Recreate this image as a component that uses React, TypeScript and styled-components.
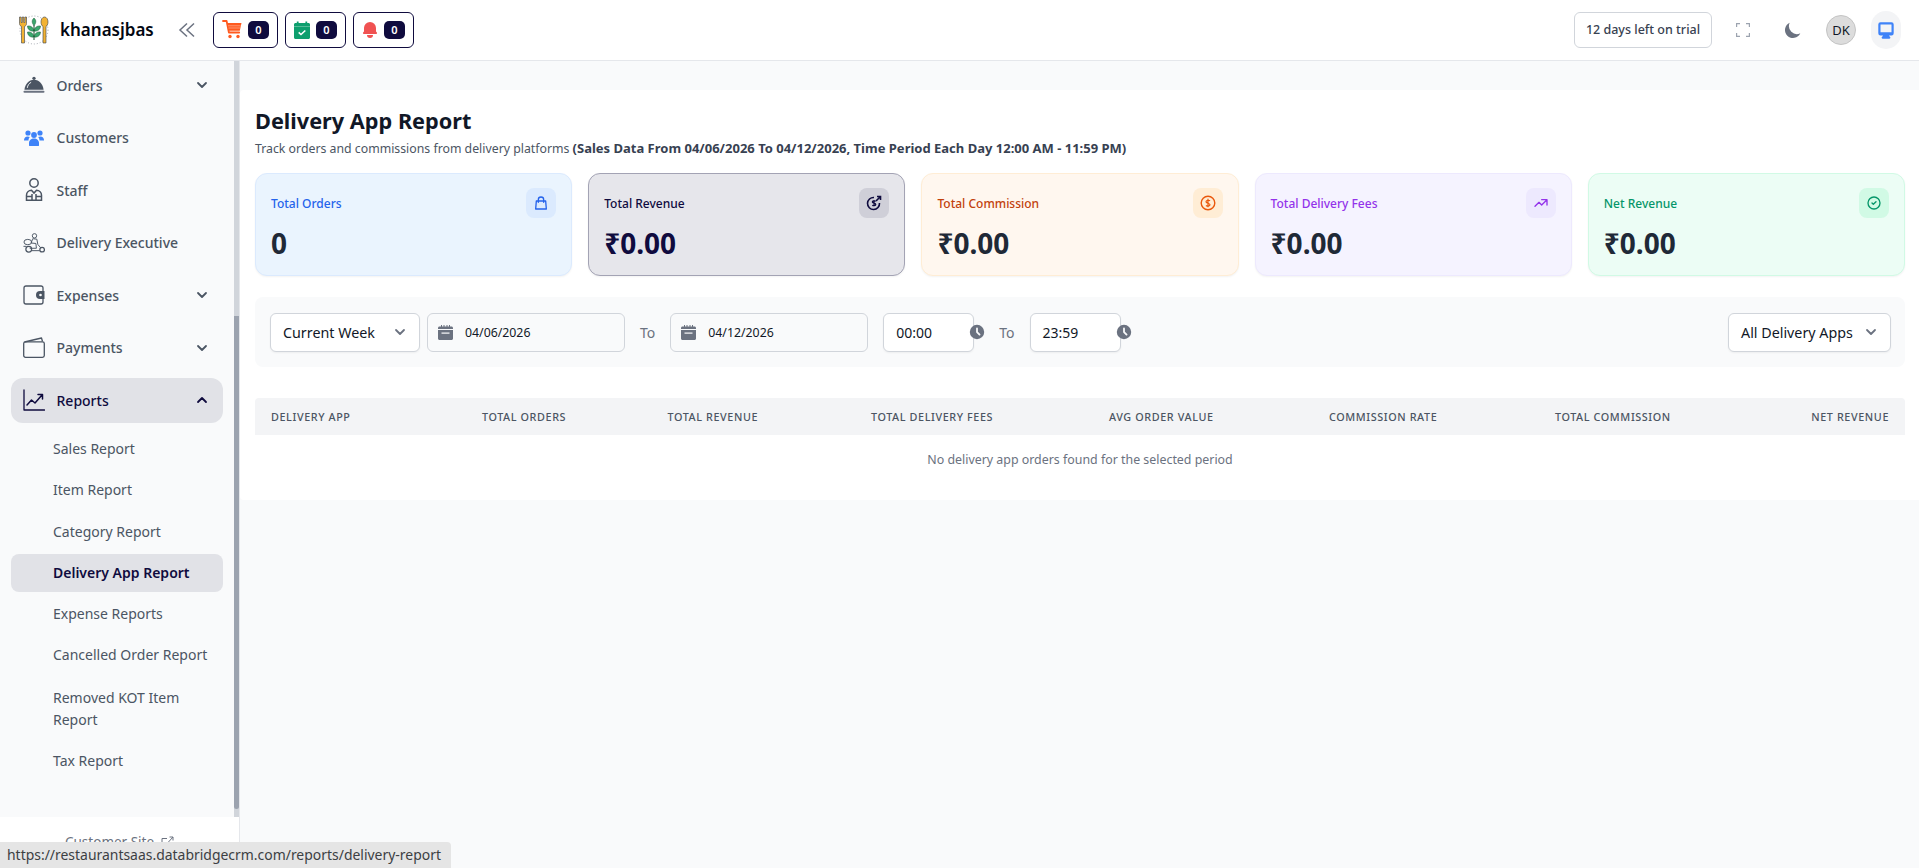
import React from 'react';
import styled, { createGlobalStyle } from 'styled-components';
import {
  HiBell,
  HiClock,
  HiDesktopComputer,
  HiMoon,
  HiOutlineCheckCircle,
  HiOutlineShoppingBag,
  HiOutlineTrendingUp,
} from 'react-icons/hi';

const NAVY = '#0f0b3e';

const GlobalStyle = createGlobalStyle`
  html, body {
    margin: 0;
    height: 100%;
    overflow: hidden;
    background: #f9fafb;
    font-family: "Noto Sans", "Liberation Sans", sans-serif;
  }
  * { box-sizing: border-box; }
`;

const Page = styled.div`
  position: relative;
  height: 868px;
  display: flex;
  flex-direction: column;
  overflow: hidden;
`;

const Header = styled.header`
  height: 61px;
  flex: none;
  background: #fff;
  border-bottom: 1px solid #e5e7eb;
  display: flex;
  align-items: center;
  padding: 0 18px 1px 18px;
`;

const Brand = styled.div`
  display: flex;
  align-items: center;
  gap: 10px;
  width: 160px;
  font-size: 17px;
  font-weight: 600;
  color: #030712;
`;

const Collapse = styled.button`
  border: 0;
  background: none;
  padding: 0;
  display: flex;
  width: 35px;
  color: #6b7280;
`;

const Counters = styled.div`
  display: flex;
  gap: 7px;
`;

const Counter = styled.div`
  height: 36px;
  padding: 0 8px;
  display: flex;
  align-items: center;
  gap: 6px;
  border: 1px solid ${NAVY};
  border-radius: 6px;
`;

const Badge = styled.span`
  min-width: 21px;
  height: 18px;
  border-radius: 5px;
  background: ${NAVY};
  color: #fff;
  font-size: 11px;
  font-weight: 600;
  display: flex;
  align-items: center;
  justify-content: center;
`;

const BellBox = styled.span`
  display: flex;
  margin: 0 -2px;
  color: #f05252;
`;

const HeaderRight = styled.div`
  margin-left: auto;
  display: flex;
  align-items: center;
`;

const Trial = styled.div`
  width: 138px;
  height: 36px;
  border: 1px solid #d1d5db;
  border-radius: 6px;
  font-size: 12.5px;
  font-weight: 500;
  color: #374151;
  display: flex;
  align-items: center;
  justify-content: center;
  margin-right: 24px;
`;

const HeaderIcon = styled.span<{ $w: number }>`
  display: flex;
  width: ${(p) => p.$w}px;
  color: #6b7280;
`;

const Avatar = styled.div`
  width: 30px;
  height: 30px;
  border-radius: 50%;
  background: #dcdcdc;
  border: 1px solid #c4c4c4;
  color: #111827;
  font-size: 13px;
  display: flex;
  align-items: center;
  justify-content: center;
  margin-right: 15px;
`;

const ThemeButton = styled.div`
  width: 30px;
  height: 38px;
  border-radius: 15px;
  background: #f3f4f6;
  color: #3f83f8;
  display: flex;
  align-items: center;
  justify-content: center;
`;

const Body = styled.div`
  flex: 1;
  display: flex;
  min-height: 0;
`;

const Sidebar = styled.aside`
  width: 240px;
  flex: none;
  display: flex;
  flex-direction: column;
  background: #fff;
  border-right: 1px solid #e5e7eb;
`;

const SideScroll = styled.div`
  height: 756px;
  flex: none;
  display: flex;
  background: #f9fafb;
`;

const Nav = styled.nav`
  flex: 1;
  padding: 1.5px 11px 0;
`;

const Track = styled.div`
  width: 5px;
  background: #d1d5db;
  padding-top: 255px;
`;

const Thumb = styled.div`
  height: 493px;
  background: #9ca3af;
  border-radius: 0 0 3px 3px;
`;

const NavItem = styled.div<{ $active?: boolean }>`
  height: 45px;
  margin-bottom: 7.5px;
  padding: 0 14px 0 12px;
  display: flex;
  align-items: center;
  gap: 11.5px;
  border-radius: 12px;
  font-size: 14px;
  font-weight: 500;
  color: ${(p) => (p.$active ? NAVY : '#4b5563')};
  background: ${(p) => (p.$active ? '#e1e2e7' : 'transparent')};
`;

const NavIcon = styled.span`
  width: 22px;
  height: 22px;
  flex: none;
  display: flex;
  align-items: center;
  justify-content: center;
`;

const Caret = styled.span`
  margin-left: auto;
  display: flex;
`;

const SubItem = styled.div<{ $active?: boolean; $tall?: boolean }>`
  margin-bottom: 3.3px;
  padding: ${(p) => (p.$tall ? '9px' : '8px')} 12px 8px 42px;
  border-radius: 8px;
  font-size: 14px;
  line-height: 22px;
  font-weight: ${(p) => (p.$active ? 600 : 400)};
  color: ${(p) => (p.$active ? NAVY : '#4b5563')};
  background: ${(p) => (p.$active ? '#e1e2e7' : 'transparent')};
`;

const SideFooter = styled.div`
  padding: 16px 0 0 65px;
  display: flex;
  align-items: center;
  gap: 7px;
  font-size: 13.5px;
  line-height: 18px;
  color: #6b7280;
`;

const StatusBar = styled.div`
  position: absolute;
  left: 0;
  bottom: 0;
  width: 451px;
  height: 26px;
  padding-left: 7px;
  background: #e5e5e5;
  border-top-right-radius: 4px;
  color: #3c4043;
  font-size: 13.95px;
  line-height: 26px;
  white-space: nowrap;
`;

const Main = styled.main`
  flex: 1;
  padding-top: 29px;
  min-width: 0;
`;

const Panel = styled.section`
  background: #fff;
  padding: 16px 14px 0 15px;
  height: 410px;
  border-radius: 4px 0 0 4px;
`;

const Title = styled.h1`
  margin: 0;
  font-size: 21.7px;
  line-height: 30px;
  font-weight: 700;
  color: #111827;
`;

const Subtitle = styled.p`
  margin: 4px 0 0;
  font-size: 12.3px;
  line-height: 17px;
  color: #4b5563;
  strong {
    font-size: 13px;
    font-weight: 700;
    color: #374151;
  }
`;

const Cards = styled.div`
  margin-top: 16px;
  display: grid;
  grid-template-columns: repeat(5, 1fr);
  gap: 16px;
`;

const tones = {
  blue: { bg: '#eaf4fe', border: '#dbeafe', label: '#2563eb', box: '#dbeafe', icon: '#2563eb', value: '#1f2937' },
  navy: { bg: '#e6e6eb', border: '#a3a3b4', label: NAVY, box: '#cfcfd8', icon: NAVY, value: NAVY },
  orange: { bg: '#fff7ef', border: '#ffedd5', label: '#c2410c', box: '#ffedd5', icon: '#ea580c', value: '#1f2937' },
  purple: { bg: '#f5f3ff', border: '#ede9fe', label: '#9333ea', box: '#ede9fe', icon: '#9333ea', value: '#1f2937' },
  green: { bg: '#ecfdf5', border: '#d1fae5', label: '#059669', box: '#d1fae5', icon: '#059669', value: '#1f2937' },
};
type Tone = keyof typeof tones;

const Card = styled.div<{ $tone: Tone }>`
  height: 103px;
  padding: 14px 15px;
  border: 1px solid ${(p) => tones[p.$tone].border};
  border-radius: 12px;
  background: ${(p) => tones[p.$tone].bg};
  box-shadow: 0 1px 2px rgba(0, 0, 0, 0.05);
`;

const CardTop = styled.div`
  display: flex;
  align-items: center;
  justify-content: space-between;
`;

const CardLabel = styled.span<{ $tone: Tone }>`
  font-size: 12px;
  font-weight: 500;
  color: ${(p) => tones[p.$tone].label};
`;

const CardIcon = styled.span<{ $tone: Tone }>`
  width: 30px;
  height: 30px;
  border-radius: 8px;
  display: flex;
  align-items: center;
  justify-content: center;
  background: ${(p) => tones[p.$tone].box};
  color: ${(p) => tones[p.$tone].icon};
`;

const CardValue = styled.div<{ $tone: Tone }>`
  margin-top: 9px;
  font-size: 28px;
  line-height: 32px;
  font-weight: 700;
  color: ${(p) => tones[p.$tone].value};
`;

const Filters = styled.div`
  margin-top: 21px;
  height: 70px;
  padding: 0 14px 0 15px;
  display: flex;
  align-items: center;
  border-radius: 8px;
  background: #f9fafb;
`;

const Select = styled.div<{ $w: number; $left?: boolean }>`
  width: ${(p) => p.$w}px;
  height: 39px;
  padding: 0 12px;
  display: flex;
  align-items: center;
  justify-content: space-between;
  border: 1px solid #d1d5db;
  border-radius: 6px;
  background: #fff;
  box-shadow: 0 1px 2px rgba(0, 0, 0, 0.05);
  font-size: 14.3px;
  color: #111827;
  margin-left: ${(p) => (p.$left ? 'auto' : '0')};
`;

const DateBox = styled.div<{ $ml: number }>`
  width: 198px;
  height: 39px;
  margin-left: ${(p) => p.$ml}px;
  padding-left: 10px;
  display: flex;
  align-items: center;
  gap: 12px;
  border: 1px solid #d1d5db;
  border-radius: 6px;
  background: #f9fafb;
  font-size: 12.3px;
  color: #111827;
`;

const ToLabel = styled.span<{ $ml: number }>`
  margin-left: ${(p) => p.$ml}px;
  font-size: 14px;
  color: #6b7280;
`;

const TimeBox = styled.div<{ $ml: number }>`
  width: 91px;
  height: 39px;
  margin-left: ${(p) => p.$ml}px;
  padding-left: 12px;
  display: flex;
  align-items: center;
  border: 1px solid #d1d5db;
  border-radius: 6px;
  background: #fff;
  box-shadow: 0 1px 2px rgba(0, 0, 0, 0.05);
  font-size: 14px;
  color: #111827;
`;

const ClockIcon = styled.span`
  display: flex;
  margin-left: -6px;
  color: #6b7280;
`;

const columns = '211px 185.5px 203.5px 238px 220px 226px 170px 1fr';

const TableHead = styled.div`
  margin-top: 31px;
  height: 37px;
  padding: 0 16px;
  display: grid;
  grid-template-columns: ${columns};
  align-items: center;
  background: #f3f4f6;
  border-radius: 4px 4px 0 0;
`;

const HeadCell = styled.span<{ $right?: boolean }>`
  font-size: 10.8px;
  font-weight: 500;
  letter-spacing: 0.6px;
  text-transform: uppercase;
  color: #4b5563;
  white-space: nowrap;
  text-align: ${(p) => (p.$right ? 'right' : 'left')};
`;

const EmptyRow = styled.div`
  padding-top: 16px;
  font-size: 12.4px;
  line-height: 18px;
  text-align: center;
  color: #6b7280;
`;

const Chevron = ({ up, size = 14, color = '#4b5563' }: { up?: boolean; size?: number; color?: string }) => (
  <svg width={size} height={size} viewBox="0 0 14 14" fill="none" stroke={color} strokeWidth="1.8" strokeLinecap="round" strokeLinejoin="round">
    <path d={up ? 'M3 9l4-4 4 4' : 'M3 5l4 4 4-4'} />
  </svg>
);

const Logo = () => (
  <svg width="32" height="32" viewBox="0 0 32 32">
    <circle cx="16" cy="16" r="14" fill="none" stroke="#6b7280" strokeWidth="0.6" strokeDasharray="1 2" />
    <path d="M1.500 3v6.500c0 1.700 1 2.600 2 3V29h3V12.500c1-.4 2-1.300 2-3V3h-1.700v5.500H5.800V3H4.200v5.500H3.200V3z" fill="#f2b233" stroke="#374151" strokeWidth="0.6" />
    <path d="M26.500 3c2.200 0 3.500 2.400 3.500 5 0 2.400-1.100 4-2 4.500V29h-3V12.500c-.9-.5-2-2.100-2-4.500 0-2.600 1.300-5 3.500-5z" fill="#f2b233" stroke="#374151" strokeWidth="0.6" />
    <path d="M16 4c2.400 2 2.400 5 0 7.500-2.400-2.500-2.400-5.500 0-7.500z" fill="#3aa76d" stroke="#14532d" strokeWidth="0.5" />
    <path d="M16 17c.4-3.500 3.200-5.500 6.500-5 0 3.500-3 5.700-6.500 5zM16 17c-.4-3.500-3.200-5.500-6.500-5 0 3.500 3 5.700 6.500 5zM16 23c.4-3.500 3.200-5.500 6.500-5 0 3.500-3 5.700-6.500 5zM16 23c-.4-3.500-3.200-5.500-6.500-5 0 3.500 3 5.700 6.500 5z" fill="#3aa76d" stroke="#14532d" strokeWidth="0.5" />
    <path d="M16 11v15" stroke="#14532d" strokeWidth="1" />
  </svg>
);

const CartIcon = () => (
  <svg width="20" height="19" viewBox="0 0 20 19">
    <path d="M1 1h3.600l2.300 11.500h10.300" fill="none" stroke="#ff5a1f" strokeWidth="1.800" strokeLinecap="round" strokeLinejoin="round" />
    <path d="M5 3h14.500l-1.700 7.700H6.500z" fill="#ff5a1f" />
    <path d="M6 5.800h12.500M6.500 8h11.500" stroke="#fff" strokeWidth="0.7" opacity="0.55" />
    <circle cx="8" cy="16.500" r="1.700" fill="#ff5a1f" />
    <circle cx="16" cy="16.500" r="1.700" fill="#ff5a1f" />
  </svg>
);

const CalendarCheck = () => (
  <svg width="16" height="18" viewBox="0 0 16 18">
    <path d="M2.800.4h1.800V2h6.800V.4h1.800V2h1.300c.8 0 1.500.7 1.500 1.500V16.500c0 .8-.7 1.500-1.500 1.500H1.500C.7 18 0 17.300 0 16.500V3.500C0 2.700.7 2 1.500 2h1.300z" fill="#0e9f6e" />
    <path d="M0 5.500h16" stroke="#fff" strokeWidth="0.6" opacity="0.5" />
    <path d="M4.700 11.300l2.300 2.200 4.300-4" stroke="#fff" strokeWidth="1.600" fill="none" />
  </svg>
);

const ExpandIcon = () => (
  <svg width="14" height="14" viewBox="0 0 14 14" fill="none" stroke="#9ca3af" strokeWidth="1.200">
    <path d="M.6 4V.6H4M10 .6h3.400V4M13.400 10v3.400H10M4 13.400H.6V10" />
  </svg>
);

const CollapseIcon = () => (
  <svg width="18" height="16" viewBox="0 0 18 16" fill="none" stroke="currentColor" strokeWidth="1.500">
    <path d="M9 1.500L2 8l7 6.500M16 1.500L9 8l7 6.500" />
  </svg>
);

const ClocheIcon = () => (
  <svg width="23" height="22" viewBox="0 0 23 22">
    <circle cx="11.500" cy="4" r="1.700" fill="#4b5563" />
    <path d="M1.500 16C2 10.200 6 5.500 11.500 5.500S21 10.200 21.500 16z" fill="#4b5563" />
    <path d="M4.500 14c.3-2.500 1.800-4.700 4-5.800" fill="none" stroke="#f9fafb" strokeWidth="1" />
    <rect x="0.500" y="17" width="22" height="2" rx="1" fill="#6b7280" />
  </svg>
);

const CustomersIcon = () => (
  <svg width="20" height="16" viewBox="0 0 20 16" fill="#3f83f8">
    <circle cx="4" cy="3" r="2.600" />
    <circle cx="16" cy="3" r="2.600" />
    <circle cx="10" cy="5" r="2.900" />
    <path d="M0 10c0-2 1.500-3.600 3.500-3.600 1 0 1.700.2 2.300.7-.8.800-1.300 2-1.300 3.400H0zM20 10c0-2-1.500-3.600-3.500-3.600-1 0-1.700.2-2.300.7.800.8 1.300 2 1.300 3.400H20z" />
    <path d="M5 15.500v-2.500c0-2.600 2.200-4.500 5-4.500s5 1.900 5 4.500v2.500c0 .3-.2.500-.5.500h-9c-.3 0-.5-.2-.5-.5z" />
  </svg>
);

const StaffIcon = () => (
  <svg width="18" height="24" viewBox="0 0 18 24" fill="none" stroke="#4b5563" strokeWidth="1.500">
    <circle cx="9" cy="5" r="4.200" />
    <path d="M1.500 22.300v-5c0-3 2.200-5 5-5.100L9 15l2.500-2.800c2.800.1 5 2.100 5 5.100v5zM7 16v6.300M11 16v6.300M1.500 18.500H7M11 18.500h5.500" />
  </svg>
);

const ScooterIcon = () => (
  <svg width="23" height="22" viewBox="0 0 23 22" fill="none" stroke="#4b5563" strokeWidth="1">
    <circle cx="12" cy="3.500" r="2.300" />
    <path d="M10 6.500l4.500.5 1 5.500 3 3.500M10 7L8.500 11l5 .5.5 5H7" />
    <ellipse cx="5" cy="10" rx="4" ry="2.800" />
    <circle cx="6" cy="17.500" r="3" strokeWidth="1.300" />
    <circle cx="20" cy="18" r="2.400" strokeWidth="1.300" />
    <path d="M9 19h8.500M0.500 14.500h3" />
  </svg>
);

const WalletIcon = () => (
  <svg width="22" height="20" viewBox="0 0 22 20" fill="none" stroke="#4b5563" strokeWidth="1.300">
    <path d="M20 6V3c0-1.200-.8-2-2-2H3C1.800 1 1 1.800 1 3v14c0 1.200.8 2 2 2h15c1.200 0 2-.8 2-2v-3" />
    <path d="M17 6h4.500v8H17a4 4 0 0 1 0-8z" fill="#4b5563" stroke="none" />
    <circle cx="17.500" cy="10" r="1.300" fill="#f9fafb" stroke="none" />
  </svg>
);

const PaymentIcon = () => (
  <svg width="22" height="21" viewBox="0 0 22 21" fill="none" stroke="#4b5563" strokeWidth="1.300" strokeLinejoin="round">
    <rect x="0.700" y="4.800" width="20.600" height="15.500" rx="1.800" />
    <path d="M1.500 5L18.500 1l1 3.500" />
  </svg>
);

const ChartIcon = () => (
  <svg width="22" height="22" viewBox="0 0 22 22" fill="none" stroke={NAVY} strokeWidth="1.300" strokeLinecap="round" strokeLinejoin="round">
    <path d="M1 1v20h20.500" />
    <path d="M4 16l4.500-5 3.500 3 7-8M15 5.500h4.500V10" strokeWidth="1.500" />
  </svg>
);

const RevenueIcon = () => (
  <svg width="16" height="16" viewBox="0 0 16 16" fill="none" stroke={NAVY} strokeWidth="1.600">
    <path d="M8 2.500A6 6 0 1 0 13.500 8" />
    <path d="M10 6l4.500-4.500M11 1.500h3.500V5" />
    <path d="M8 5v6M9.700 6.300C9 5.600 6.300 5.600 6.300 7s3.500 1 3.500 2.500-2.800 1.300-3.500.7" strokeWidth="1.200" />
  </svg>
);

const DollarIcon = () => (
  <svg width="16" height="16" viewBox="0 0 16 16" fill="none" stroke="#ea580c" strokeWidth="1.400">
    <circle cx="8" cy="8" r="6.800" />
    <path d="M8 3.800v8.400M10 5.800C9.300 5 6 5 6 6.700s4 1.300 4 3-3.300 1.600-4 .8" strokeWidth="1.200" />
  </svg>
);

const DateIcon = () => (
  <svg width="15" height="15" viewBox="0 0 15 15" fill="#6b7280">
    <path d="M3 0h1v1.500h1.500V0h1v1.500H8.500V0h1v1.500H11V0h1v1.500h1.500c.8 0 1.500.7 1.500 1.500v1H0V3c0-.8.7-1.500 1.500-1.500H3z" />
    <path d="M0 5h15v8.500c0 .8-.7 1.500-1.500 1.500h-12C.7 15 0 14.300 0 13.500z" />
    <rect x="3.500" y="7.500" width="8" height="1.200" fill="#f9fafb" />
  </svg>
);

const ExternalIcon = () => (
  <svg width="13" height="13" viewBox="0 0 13 13" fill="none" stroke="#6b7280" strokeWidth="1">
    <path d="M6 2.500H1v9.500h9.500V7M7 6.500L12 1M8.500 1H12v3.500" />
  </svg>
);

const statCards: { label: string; value: string; tone: Tone; icon: React.ReactNode }[] = [
  { label: 'Total Orders', value: '0', tone: 'blue', icon: <HiOutlineShoppingBag size={16} /> },
  { label: 'Total Revenue', value: '₹0.00', tone: 'navy', icon: <RevenueIcon /> },
  { label: 'Total Commission', value: '₹0.00', tone: 'orange', icon: <DollarIcon /> },
  { label: 'Total Delivery Fees', value: '₹0.00', tone: 'purple', icon: <HiOutlineTrendingUp size={16} /> },
  { label: 'Net Revenue', value: '₹0.00', tone: 'green', icon: <HiOutlineCheckCircle size={16} /> },
];

const navItems = [
  { label: 'Orders', icon: <ClocheIcon />, caret: true },
  { label: 'Customers', icon: <CustomersIcon /> },
  { label: 'Staff', icon: <StaffIcon /> },
  { label: 'Delivery Executive', icon: <ScooterIcon /> },
  { label: 'Expenses', icon: <WalletIcon />, caret: true },
  { label: 'Payments', icon: <PaymentIcon />, caret: true },
];

const reportLinks = [
  'Sales Report',
  'Item Report',
  'Category Report',
  'Delivery App Report',
  'Expense Reports',
  'Cancelled Order Report',
  'Removed KOT Item Report',
  'Tax Report',
];

const tableColumns = [
  'Delivery App',
  'Total Orders',
  'Total Revenue',
  'Total Delivery Fees',
  'Avg Order Value',
  'Commission Rate',
  'Total Commission',
];

export default function App() {
  return (
    <Page>
      <GlobalStyle />
      <Header>
        <Brand>
          <Logo />
          khanasjbas
        </Brand>
        <Collapse>
          <CollapseIcon />
        </Collapse>
        <Counters>
          <Counter>
            <CartIcon />
            <Badge>0</Badge>
          </Counter>
          <Counter>
            <CalendarCheck />
            <Badge>0</Badge>
          </Counter>
          <Counter>
            <BellBox>
              <HiBell size={20} />
            </BellBox>
            <Badge>0</Badge>
          </Counter>
        </Counters>
        <HeaderRight>
          <Trial>12 days left on trial</Trial>
          <HeaderIcon $w={47}>
            <ExpandIcon />
          </HeaderIcon>
          <HeaderIcon $w={43}>
            <HiMoon size={20} />
          </HeaderIcon>
          <Avatar>DK</Avatar>
          <ThemeButton>
            <HiDesktopComputer size={22} />
          </ThemeButton>
        </HeaderRight>
      </Header>
      <Body>
        <Sidebar>
          <SideScroll>
            <Nav>
              {navItems.map((item) => (
                <NavItem key={item.label}>
                  <NavIcon>{item.icon}</NavIcon>
                  {item.label}
                  {item.caret && (
                    <Caret>
                      <Chevron />
                    </Caret>
                  )}
                </NavItem>
              ))}
              <NavItem $active>
                <NavIcon>
                  <ChartIcon />
                </NavIcon>
                Reports
                <Caret>
                  <Chevron up color={NAVY} />
                </Caret>
              </NavItem>
              {reportLinks.map((link) => (
                <SubItem
                  key={link}
                  $active={link === 'Delivery App Report'}
                  $tall={link === 'Removed KOT Item Report'}
                >
                  {link}
                </SubItem>
              ))}
            </Nav>
            <Track>
              <Thumb />
            </Track>
          </SideScroll>
          <SideFooter>
            Customer Site
            <ExternalIcon />
          </SideFooter>
        </Sidebar>
        <Main>
          <Panel>
            <Title>Delivery App Report</Title>
            <Subtitle>
              Track orders and commissions from delivery platforms{' '}
              <strong>(Sales Data From 04/06/2026 To 04/12/2026, Time Period Each Day 12:00 AM - 11:59 PM)</strong>
            </Subtitle>
            <Cards>
              {statCards.map((card) => (
                <Card key={card.label} $tone={card.tone}>
                  <CardTop>
                    <CardLabel $tone={card.tone}>{card.label}</CardLabel>
                    <CardIcon $tone={card.tone}>{card.icon}</CardIcon>
                  </CardTop>
                  <CardValue $tone={card.tone}>{card.value}</CardValue>
                </Card>
              ))}
            </Cards>
            <Filters>
              <Select $w={150}>
                Current Week
                <Chevron color="#6b7280" />
              </Select>
              <DateBox $ml={7}>
                <DateIcon />
                04/06/2026
              </DateBox>
              <ToLabel $ml={15}>To</ToLabel>
              <DateBox $ml={15}>
                <DateIcon />
                04/12/2026
              </DateBox>
              <TimeBox $ml={15}>00:00</TimeBox>
              <ClockIcon>
                <HiClock size={18} />
              </ClockIcon>
              <ToLabel $ml={13}>To</ToLabel>
              <TimeBox $ml={15}>23:59</TimeBox>
              <ClockIcon>
                <HiClock size={18} />
              </ClockIcon>
              <Select $w={163} $left>
                All Delivery Apps
                <Chevron color="#6b7280" />
              </Select>
            </Filters>
            <TableHead>
              {tableColumns.map((col) => (
                <HeadCell key={col}>{col}</HeadCell>
              ))}
              <HeadCell $right>Net Revenue</HeadCell>
            </TableHead>
            <EmptyRow>No delivery app orders found for the selected period</EmptyRow>
          </Panel>
        </Main>
      </Body>
      <StatusBar>https://restaurantsaas.databridgecrm.com/reports/delivery-report</StatusBar>
    </Page>
  );
}
